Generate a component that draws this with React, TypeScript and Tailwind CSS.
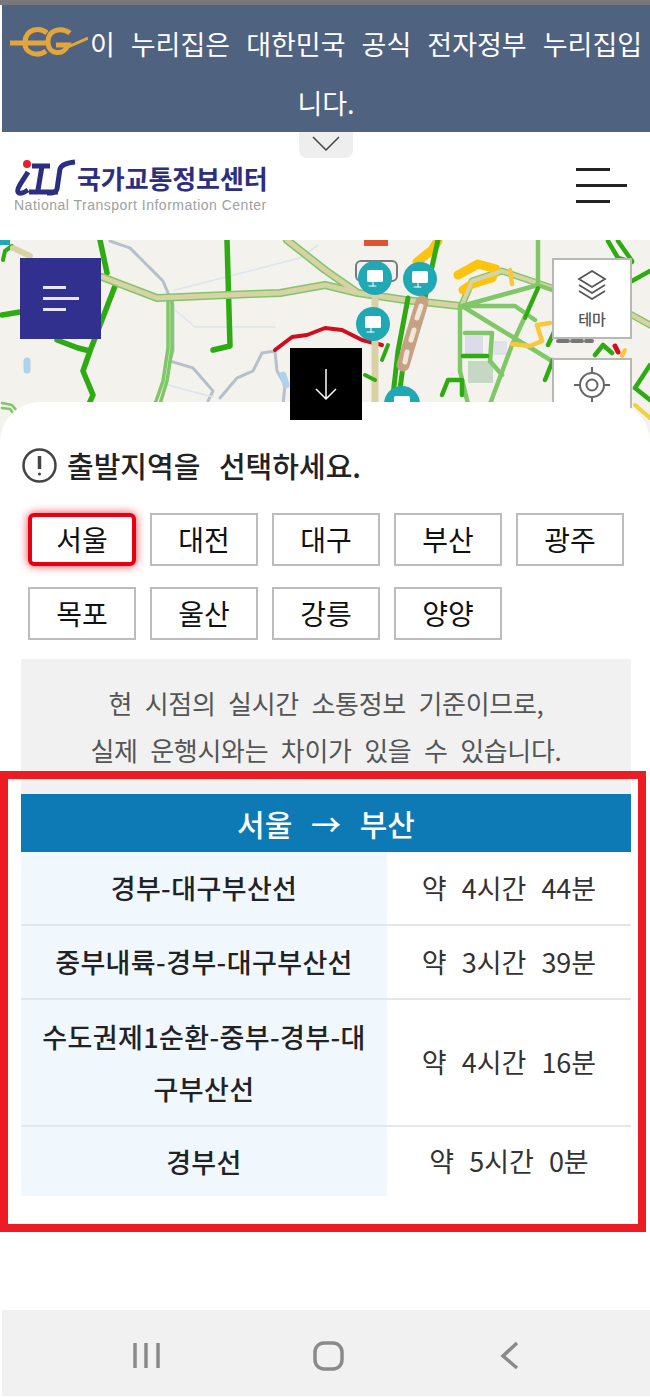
import React from 'react';

const FONT = '"Noto Sans CJK KR", "Noto Sans", sans-serif';

const CITIES = ['서울', '대전', '대구', '부산', '광주', '목포', '울산', '강릉', '양양'];

const ROUTES = [
  { name: '경부-대구부산선', time: '약 4시간 44분', height: 'h-[74px]' },
  { name: '중부내륙-경부-대구부산선', time: '약 3시간 39분', height: 'h-[74px]' },
  { name: '수도권제1순환-중부-경부-대구부산선', time: '약 4시간 16분', height: 'h-[127px]' },
  { name: '경부선', time: '약 5시간 0분', height: 'h-[69px]' },
];

function EgLogo() {
  return (
    <svg width="78" height="36" viewBox="0 0 78 36" className="inline-block align-[-6px] mr-[2px]" fill="none" stroke="#e3a63c" strokeWidth="5">
      <path d="M0 18 H36" />
      <path d="M37 8 C30 2 16 3 15 17 C14 29 28 32 36 26" />
      <path d="M60 8 C52 2 38 4 38 17 C38 30 54 31 58 20 H46" />
      <path d="M58 22 L78 13" strokeWidth="3" />
    </svg>
  );
}

function ItsLogo() {
  return (
    <svg width="64" height="38" viewBox="0 0 64 38" fill="none" className="shrink-0">
      <circle cx="13" cy="5" r="4" fill="#e8202a" />
      <path d="M14 13 C10 20 2 30 4 33 C6 36 11 33 14 31" stroke="#2c2f80" strokeWidth="5" />
      <path d="M18 7 H36 M28 7 L24 31 M15 33 H44" stroke="#2c2f80" strokeWidth="5" />
      <path d="M61 3 C52 4 47 6 46 10 L43 30 C42 34 38 34 33 34" stroke="#2c2f80" strokeWidth="5" />
    </svg>
  );
}

function Marker({ cx, cy, r = 17 }: { cx: number; cy: number; r?: number }) {
  return (
    <g>
      <circle cx={cx} cy={cy} r={r} fill="#20a8b4" />
      <rect x={cx - 8} y={cy - 8} width="16" height="12" rx="1.5" fill="#ffffff" />
      <path d={`M${cx - 6} ${cy + 8} H${cx + 1} M${cx - 2} ${cy + 4} V${cy + 8}`} stroke="#ffffff" strokeWidth="1" />
    </g>
  );
}

// traffic map, coordinates follow the page so y starts at 240
function TrafficMap() {
  const green = '#2eaa12';
  const light = '#7fc767';
  const beige = '#d8d2a6';
  const river = '#b5c0cc';
  return (
    <svg className="absolute inset-0 blur-[0.5px]" width="650" height="230" viewBox="0 240 650 230" fill="none" strokeLinecap="round" strokeLinejoin="round">
      <rect x="465" y="336" width="18" height="18" fill="#dcdce8" />
      <rect x="492" y="341" width="15" height="14" fill="#e2e2ea" />
      <rect x="468" y="361" width="25" height="22" fill="#c6d7c4" />
      <rect x="0" y="240" width="10" height="5" fill="#20a8b4" />
      <path d="M110 241 L130 248 L163 281 L173 305 L173 351 L170 361 L193 368 L213 391 L208 401" stroke={river} strokeWidth="3" strokeDasharray="6 1" />
      <path d="M220 398 L237 378 L253 371 L262 353 L275 351 L277 371 L285 385 L283 405" stroke={river} strokeWidth="3" strokeDasharray="6 1" />
      <path d="M175 290 L300 258 L318 245 M175 310 L195 327 L275 327 M168 385 L213 397" stroke="#dbe5ec" strokeWidth="1.5" />
      <path d="M27 361 V370 M283 375 L286 385" stroke="#aed3ea" strokeWidth="7" />
      <path d="M100 240 L107 273 M115 286 L90 351 L83 371 L93 395 L89 404 M57 340 L78 348 L90 351 M2 315 L20 312" stroke={green} strokeWidth="5.5" />
      <path d="M227 240 L230 346 L213 350" stroke={green} strokeWidth="5.5" />
      <path d="M3 260 L5 251 L12 246" stroke={green} strokeWidth="4" />
      <path d="M13 248 L30 256" stroke={beige} strokeWidth="6" />
      <path d="M168 300 V348 L163 381 L155 404 M172 300 V348 L167 381 L160 404" stroke={light} strokeWidth="3.5" />
      <path d="M2 403 L12 405 L22 417 M2 408 L10 409 L18 420" stroke={light} strokeWidth="2.5" />
      <path d="M287 240 L325 270 L358 293 L405 300 L460 306 M102 277 L157 298 L227 295 L280 293 L325 285 L358 293" stroke={light} strokeWidth="8" />
      <path d="M287 240 L325 270 L358 293 L405 300 L460 306 M102 277 L157 298 L227 295 L280 293 L325 285 L358 293" stroke={beige} strokeWidth="5" />
      <path d="M462 305 L472 281 L502 271 L552 288 M632 315 L650 325" stroke={light} strokeWidth="7" />
      <path d="M458 275 L478 264 L496 269 L492 278 L472 284 L463 290 M417 262 L432 250 L438 241" stroke="#fcc30f" strokeWidth="9" />
      <path d="M462 305 L472 281 L502 271 L552 288 M632 315 L650 325" stroke={beige} strokeWidth="4" />
      <path d="M275 350 L292 337 L307 335 L325 328 L342 330 L362 340 L382 345" stroke="#d00d1c" strokeWidth="4" />
      <path d="M438 240 L425 298 L405 351 L398 404 M408 298 L398 351 L392 404" stroke={green} strokeWidth="5" />
      <path d="M422 302 L403 365" stroke="#c5a283" strokeWidth="13" />
      <path d="M421 306 L417 318 M414 330 L411 340 M407 352 L405 362" stroke="#f1e6dc" strokeWidth="5" />
      <path d="M375 290 V404" stroke={beige} strokeWidth="7" />
      <path d="M388 345 L382 360 M375 380 L365 375" stroke={green} strokeWidth="4" />
      <path d="M462 306 L538 285 L552 290 M462 306 L552 361 M460 306 V371 L468 404 M465 333 H492 L490 361 L502 375 M538 288 L512 345 L490 404 M538 241 V285 M462 306 L515 306 L535 320" stroke={light} strokeWidth="4.5" />
      <path d="M538 288 L525 318" stroke={green} strokeWidth="4" />
      <path d="M463 356 H487 M442 395 L448 380 H462 V395" stroke={green} strokeWidth="4.5" />
      <path d="M512 344 L530 346 L542 341 L537 325 L550 323 M510 270 L512 284" stroke="#f8c83a" strokeWidth="4.5" />
      <path d="M553 360 L545 380 M555 330 L548 345 M595 355 L603 345 L612 353 M608 241 L618 258 L632 262 M618 241 L632 261 M632 281 L650 271 M635 388 L650 365 M635 388 L650 400" stroke={green} strokeWidth="4.5" />
      <path d="M615 346 L618 352" stroke="#d80c1d" strokeWidth="5" />
      <path d="M625 350 L622 356" stroke="#f8c83a" strokeWidth="4" />
      <path d="M635 405 L650 418" stroke="#f0d23a" strokeWidth="4" />
      <path d="M632 315 L650 325" stroke={beige} strokeWidth="4" />
      <rect x="364" y="238" width="24" height="8" fill="#dc5430" />
      <rect x="356" y="261" width="41" height="20" rx="5" stroke="#777a80" strokeWidth="2" />
      <path d="M558 341 H592" stroke="#777" strokeWidth="4" strokeDasharray="10 4" />
      <Marker cx={375} cy={278} />
      <Marker cx={420} cy={279} />
      <Marker cx={373} cy={324} />
      <Marker cx={402} cy={404} r={18} />
    </svg>
  );
}

export default function App() {
  return (
    <div className="relative w-[650px] h-[1397px] overflow-hidden bg-white flex flex-col" style={{ fontFamily: FONT }}>
      <div className="h-[5px] bg-[#78777b]" />

      {/* 누리집 banner */}
      <div className="ml-[2px] h-[127px] bg-[#4f6280] text-center text-white text-[27px] leading-[59px] whitespace-nowrap [word-spacing:10px] pt-[9px]">
        <EgLogo />이 누리집은 대한민국 공식 전자정부 누리집입
        <br />
        니다.
      </div>
      <div className="absolute left-[299px] top-[132px] w-[54px] h-[26px] bg-[#eeeeee] rounded-b-[8px] flex justify-center pt-[4px]">
        <svg width="30" height="15" viewBox="0 0 30 15" fill="none" stroke="#444" strokeWidth="1.5">
          <path d="M2 1 L15 14 L28 1" />
        </svg>
      </div>

      {/* header */}
      <div className="h-[108px] flex items-start justify-between pl-[14px] pr-[23px] pt-[27px]">
        <div className="flex flex-col">
          <div className="flex items-center h-[38px]">
            <ItsLogo />
            <span className="text-[26px] leading-[38px] font-bold text-[#2c2f80] -ml-[1px] tracking-[-0.1px] whitespace-nowrap">국가교통정보센터</span>
          </div>
          <span className="text-[14px] leading-[16px] text-[#a0a0a0] tracking-[0.5px] whitespace-nowrap" style={{ fontFamily: '"Liberation Sans", sans-serif' }}>
            National Transport Information Center
          </span>
        </div>
        <div className="flex flex-col gap-[13px] w-[51px] mt-[9px]">
          <div className="h-[3px] w-[34px] bg-[#222222]" />
          <div className="h-[3px] w-[51px] bg-[#222222]" />
          <div className="h-[3px] w-[34px] bg-[#222222]" />
        </div>
      </div>

      {/* map */}
      <div className="relative h-[230px] bg-[#f3f2ed] overflow-hidden">
        <TrafficMap />
        <div className="absolute left-[20px] top-[18px] w-[81px] h-[81px] bg-[#32308f] flex flex-col justify-center gap-[8px] pl-[23px]">
          <div className="h-[3px] w-[23px] bg-[#e6e6f4]" />
          <div className="h-[3px] w-[36px] bg-[#e6e6f4]" />
          <div className="h-[3px] w-[23px] bg-[#e6e6f4]" />
        </div>
        <div className="absolute left-[552px] top-[18px] w-[80px] h-[81px] bg-white border-2 border-[#b8b8b8] flex flex-col items-center pt-[9px]">
          <svg width="30" height="32" viewBox="0 0 30 32" fill="none" stroke="#555" strokeWidth="1.8">
            <path d="M15 2 L28 10 L15 18 L2 10 Z" />
            <path d="M2 16 L15 24 L28 16" />
            <path d="M2 22 L15 30 L28 22" />
          </svg>
          <span className="text-[15px] leading-[20px] mt-[8px] font-medium text-[#555555]">테마</span>
        </div>
        <div className="absolute left-[552px] top-[118px] w-[80px] h-[81px] bg-white border-2 border-[#b8b8b8] flex justify-center pt-[6px]">
          <svg width="38" height="38" viewBox="0 0 38 38" fill="none" stroke="#666" strokeWidth="2">
            <circle cx="19" cy="19" r="12" />
            <circle cx="19" cy="19" r="5.5" />
            <path d="M19 1 V7 M19 31 V37 M1 19 H7 M31 19 H37" />
          </svg>
        </div>
      </div>

      {/* bottom sheet */}
      <div className="relative -mt-[68px] bg-white rounded-t-[40px] pt-[38px]">
        <div className="absolute left-[290px] -top-[54px] w-[72px] h-[72px] bg-black flex items-center justify-center">
          <svg width="24" height="34" viewBox="0 0 24 34" fill="none" stroke="#ffffff" strokeWidth="1.5">
            <path d="M12 2 V32 M2 22 L12 32 L22 22" />
          </svg>
        </div>

        <div className="flex items-center pl-[21px] h-[50px]">
          <svg width="37" height="37" viewBox="0 0 37 37" fill="none" stroke="#444" strokeWidth="2.5" className="shrink-0">
            <circle cx="18.5" cy="18.5" r="16" />
            <path d="M18.5 9 V22" strokeWidth="3.5" />
            <circle cx="18.5" cy="27" r="1.5" fill="#444" stroke="none" />
          </svg>
          <h2 className="ml-[9px] text-[29px] leading-[50px] font-medium text-[#222222] [word-spacing:12px] whitespace-nowrap">출발지역을 선택하세요.</h2>
        </div>

        <div className="grid grid-cols-[repeat(5,108px)] gap-x-[14px] gap-y-[21px] pl-[28px] mt-[23px]">
          {CITIES.map((city, i) => (
            <div
              key={city}
              className={
                i === 0
                  ? 'h-[53px] flex items-center justify-center pb-[2px] bg-white rounded-[6px] border-[4px] border-[#e60012] shadow-[0_0_10px_rgba(230,0,18,0.75)] text-[28px] text-[#111111]'
                  : 'h-[53px] flex items-center justify-center pb-[2px] bg-white border-2 border-[#bcbcbc] text-[28px] text-[#111111]'
              }
            >
              {city}
            </div>
          ))}
        </div>

        <div className="ml-[21px] mt-[19px] w-[610px] h-[135px] bg-[#f1f1f1] pt-[20px] text-center text-[26px] leading-[47px] text-[#555555] [word-spacing:7px] tracking-[-0.3px] whitespace-nowrap">
          현 시점의 실시간 소통정보 기준이므로,
          <br />
          실제 운행시와는 차이가 있을 수 있습니다.
        </div>

        {/* route table */}
        <div className="ml-[21px] w-[610px]">
          <div className="h-[58px] bg-[#0d79b5] flex items-center justify-center text-white text-[30px] font-medium [word-spacing:12px]">
            서울 → 부산
          </div>
          {ROUTES.map((route, i) => (
            <div key={route.name} className={`flex ${route.height} ${i < ROUTES.length - 1 ? 'border-b-2 border-[#e3e6ea]' : ''}`}>
              <div className="w-[366px] bg-[#f0f7fd] px-[19px] flex items-center justify-center text-center text-[27px] leading-[52px] font-medium tracking-[0.4px] text-[#222222] break-all">
                {route.name}
              </div>
              <div className="flex-1 flex items-center justify-center text-[27px] text-[#333333] [word-spacing:9px]">
                {route.time}
              </div>
            </div>
          ))}
        </div>
      </div>

      {/* annotation box */}
      <div className="absolute left-0 top-[771px] w-[646px] h-[461px] border-[8px] border-[#ed1c24]" />

      {/* android nav bar */}
      <div className="mt-auto mb-[1px] ml-[2px] h-[86px] bg-[#f1f1f1] relative">
        <svg width="648" height="86" viewBox="2 1310 648 86" fill="none" stroke="#8a8a8a" strokeWidth="3.5">
          <path d="M135 1343 V1368 M146 1343 V1368 M158 1343 V1368" />
          <rect x="315" y="1343" width="27" height="26" rx="9" />
          <path d="M517 1343 L503 1356 L517 1368" />
        </svg>
      </div>
    </div>
  );
}
